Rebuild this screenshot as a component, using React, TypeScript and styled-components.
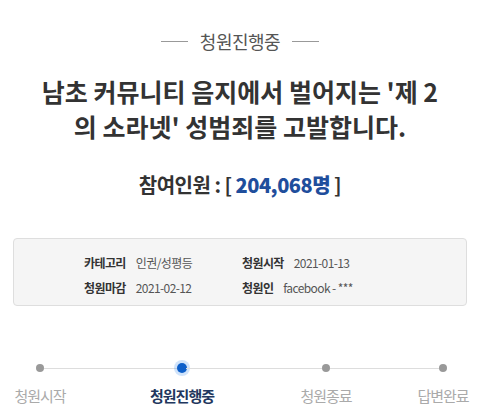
import React from 'react';
import styled, { createGlobalStyle } from 'styled-components';

const GlobalStyle = createGlobalStyle`
    html, body {
        margin: 0;
        padding: 0;
        background: #fff;
    }
    body {
        font-family: 'Noto Sans CJK KR', 'Noto Sans', sans-serif;
        color: #333;
    }
`;

const Page = styled.div`
    width: 480px;
    height: 419px;
    overflow: hidden;
    display: flex;
    flex-direction: column;
    align-items: center;
`;

const Status = styled.div`
    margin-top: 29px;
    display: flex;
    align-items: center;
    gap: 12px;
    font-size: 18px;
    line-height: 24px;
    color: #555;
    letter-spacing: -0.5px;
    &::before,
    &::after {
        content: '';
        width: 27px;
        height: 1px;
        background: #999;
    }
`;

const Title = styled.h1`
    margin: 21px 0 0;
    font-size: 25px;
    line-height: 35px;
    font-weight: 700;
    text-align: center;
    color: #333;
`;

const Count = styled.div`
    margin-top: 28px;
    font-size: 20px;
    line-height: 26px;
    font-weight: 700;
    color: #333;
    letter-spacing: -0.5px;
    & strong {
        color: #1f4e9c;
    }
`;

const InfoBox = styled.div`
    box-sizing: border-box;
    margin-top: 40px;
    width: 454px;
    height: 68px;
    background: #f5f5f5;
    border: 1px solid #dedede;
    border-radius: 4px;
    padding: 11px 0 0 70px;
    display: grid;
    grid-template-columns: 158px 1fr;
    grid-auto-rows: 25px;
    align-items: center;
`;

const Info = styled.div`
    display: flex;
    align-items: center;
    gap: 10px;
    font-size: 12px;
    letter-spacing: -0.6px;
    white-space: nowrap;
    & b {
        color: #333;
        font-weight: 700;
    }
    & span {
        color: #555;
    }
`;

const Steps = styled.div`
    margin-top: 54px;
    width: 480px;
`;

const Track = styled.div`
    display: flex;
    align-items: center;
    padding-left: 36px;
    height: 16px;
`;

const Dot = styled.span<{ $active?: boolean }>`
    flex: none;
    width: ${(p) => (p.$active ? 10 : 8)}px;
    height: ${(p) => (p.$active ? 10 : 8)}px;
    margin: 0 ${(p) => (p.$active ? -1 : 0)}px;
    border-radius: 50%;
    background: ${(p) => (p.$active ? '#0d5fc9' : '#999')};
    box-shadow: ${(p) => (p.$active ? '0 0 0 3px rgba(66, 145, 235, 0.25)' : 'none')};
`;

const Segment = styled.span<{ $w: number }>`
    flex: none;
    width: ${(p) => p.$w}px;
    height: 1px;
    background: #ddd;
`;

const Labels = styled.div`
    display: flex;
    margin-top: 10px;
`;

const Label = styled.div<{ $gap: number; $active?: boolean }>`
    flex: none;
    width: 70px;
    margin-left: ${(p) => p.$gap}px;
    text-align: center;
    font-size: 15px;
    line-height: 20px;
    letter-spacing: -1px;
    font-weight: ${(p) => (p.$active ? 700 : 400)};
    color: ${(p) => (p.$active ? '#22375e' : '#aaa')};
`;

export default function App() {
    return (
        <>
            <GlobalStyle />
            <Page>
                <Status>청원진행중</Status>
                <Title>
                    남초 커뮤니티 음지에서 벌어지는 '제 2
                    <br />의 소라넷' 성범죄를 고발합니다.
                </Title>
                <Count>
                    참여인원 : [ <strong>204,068명</strong> ]
                </Count>
                <InfoBox>
                    <Info>
                        <b>카테고리</b>
                        <span>인권/성평등</span>
                    </Info>
                    <Info>
                        <b>청원시작</b>
                        <span>2021-01-13</span>
                    </Info>
                    <Info>
                        <b>청원마감</b>
                        <span>2021-02-12</span>
                    </Info>
                    <Info>
                        <b>청원인</b>
                        <span>facebook - ***</span>
                    </Info>
                </InfoBox>
                <Steps>
                    <Track>
                        <Dot />
                        <Segment $w={134} />
                        <Dot $active />
                        <Segment $w={136} />
                        <Dot />
                        <Segment $w={109} />
                        <Dot />
                    </Track>
                    <Labels>
                        <Label $gap={5}>청원시작</Label>
                        <Label $gap={72} $active>
                            청원진행중
                        </Label>
                        <Label $gap={74}>청원종료</Label>
                        <Label $gap={47}>답변완료</Label>
                    </Labels>
                </Steps>
            </Page>
        </>
    );
}
